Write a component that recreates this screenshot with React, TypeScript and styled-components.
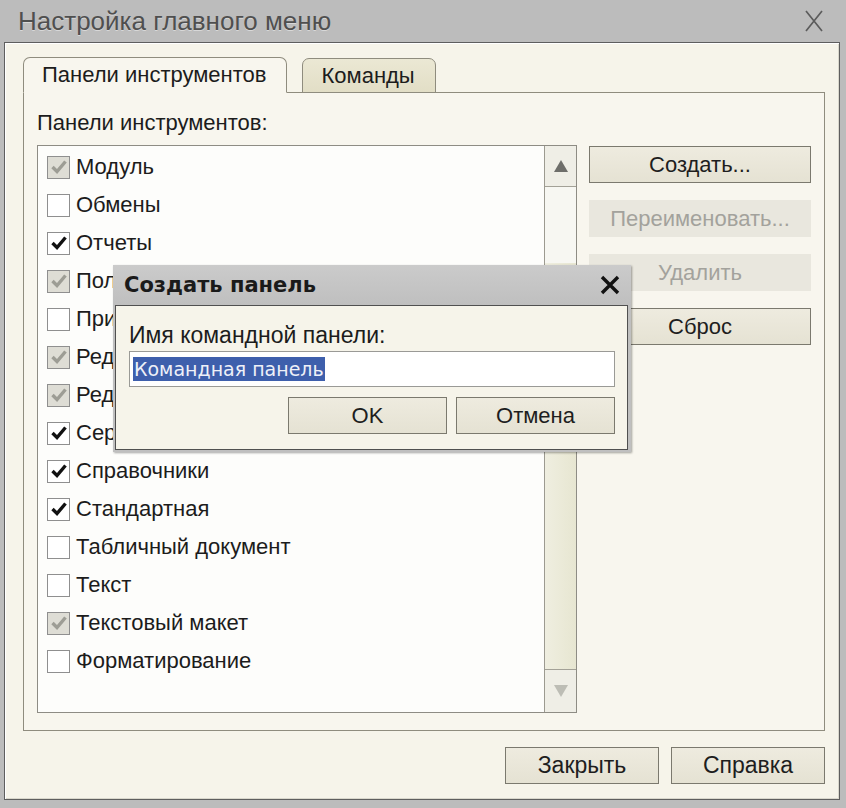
import styled, { createGlobalStyle } from "styled-components";

const GlobalStyle = createGlobalStyle`
  html, body {
    margin: 0;
    padding: 0;
    background: #bcbcbc;
  }
  body {
    font-family: "Liberation Sans", Arial, sans-serif;
    color: #1c1c1c;
  }
  * {
    box-sizing: border-box;
  }
`;

const Window = styled.div`
  position: relative;
  width: 846px;
  height: 808px;
  display: flex;
  flex-direction: column;
  background: #bcbcbc;
  padding: 0 6px 8px 4px;
`;

const TitleBar = styled.div`
  height: 42px;
  display: flex;
  align-items: center;
  justify-content: space-between;
  padding: 0 16px 0 14px;
  font-size: 26px;
  color: #4f4f4f;
  text-shadow: 0 1px 0 #d8d8d8;
`;

const Body = styled.div`
  flex: 1;
  display: flex;
  flex-direction: column;
  background: #f6f4ea;
  border: 1px solid #5e5e5e;
  box-shadow: inset 1px 1px 0 #ffffff, inset -1px -1px 0 #d9d7cc;
  padding: 14px 14px 15px 18px;
`;

const TabStrip = styled.div`
  display: flex;
  align-items: flex-end;
  gap: 15px;
  height: 36px;
  margin-bottom: -1px;
  position: relative;
  z-index: 1;
`;

const Tab = styled.div<{ $active?: boolean }>`
  height: ${(p) => (p.$active ? "36px" : "35px")};
  display: flex;
  align-items: center;
  padding: 0 20px 0 18px;
  font-size: 22px;
  border: 1px solid #8f8c7e;
  border-bottom: 1px solid ${(p) => (p.$active ? "#f8f6ee" : "#8f8c7e")};
  border-radius: 7px 7px 0 0;
  background: ${(p) => (p.$active ? "#f8f6ee" : "linear-gradient(#ebe8d4, #e2dec6)")};
`;

const Panel = styled.div`
  flex: 1;
  display: flex;
  flex-direction: column;
  background: #f8f6ee;
  border: 1px solid #8f8c7e;
  padding: 18px 13px 17px 13px;
`;

const Label = styled.div<{ $size?: number }>`
  font-size: ${(p) => p.$size ?? 22}px;
  line-height: 24px;
`;

const PanelRow = styled.div`
  flex: 1;
  display: flex;
  gap: 12px;
  margin-top: 10px;
`;

const ListBox = styled.div`
  width: 540px;
  display: flex;
  background: #fdfdfb;
  border: 1px solid #8e8c84;
`;

const Items = styled.div`
  flex: 1;
  display: flex;
  flex-direction: column;
  padding: 2px 0 0 9px;
  overflow: hidden;
`;

const Item = styled.div`
  height: 38px;
  display: flex;
  align-items: center;
  gap: 6px;
  font-size: 22px;
  white-space: nowrap;
`;

const Box = styled.span<{ $state: "on" | "gray" | "off" }>`
  width: 23px;
  height: 23px;
  flex-shrink: 0;
  display: flex;
  align-items: center;
  justify-content: center;
  border: 1px solid #8f8f8f;
  background: ${(p) => (p.$state === "gray" ? "#deddd5" : "#ffffff")};
`;

const Scrollbar = styled.div`
  width: 32px;
  display: flex;
  flex-direction: column;
  border-left: 1px solid #9c9a90;
`;

const ScrollButton = styled.div<{ $bottom?: boolean }>`
  height: ${(p) => (p.$bottom ? "43px" : "41px")};
  display: flex;
  align-items: center;
  justify-content: center;
  background: #efeee6;
  border-${(p) => (p.$bottom ? "top" : "bottom")}: 1px solid #a3a197;
`;

const Track = styled.div`
  flex: 1;
  display: flex;
  flex-direction: column;
  background: #f7f7f2;
`;

const Thumb = styled.div`
  flex: 1;
  margin-top: 76px;
  background: linear-gradient(to right, #efeee0, #e7e6d1);
`;

const SideButtons = styled.div`
  width: 222px;
  display: flex;
  flex-direction: column;
  gap: 17px;
  padding-top: 1px;
`;

const Button = styled.button<{ $width?: number }>`
  height: 37px;
  width: ${(p) => (p.$width ? `${p.$width}px` : "100%")};
  display: flex;
  align-items: center;
  justify-content: center;
  font-family: "Liberation Sans", Arial, sans-serif;
  font-size: 22px;
  color: #1e1e1e;
  background: linear-gradient(#eeebdf, #e5e2d3);
  border: 1px solid #7b796e;
  padding: 0;

  &:disabled {
    color: #a3a29c;
    border-color: transparent;
    background: #e9e7de;
  }
`;

const Footer = styled.div`
  display: flex;
  justify-content: flex-end;
  gap: 12px;
  margin-top: 16px;

  & > button {
    font-size: 23px;
  }
`;

const Dialog = styled.div`
  position: absolute;
  left: 113px;
  top: 265px;
  width: 518px;
  height: 187px;
  display: flex;
  flex-direction: column;
  background: linear-gradient(#cbcbcb, #bfbfbf 40px);
  box-shadow: 1px 1px 2px rgba(0, 0, 0, 0.35);
`;

const DialogTitle = styled.div`
  height: 40px;
  display: flex;
  align-items: center;
  justify-content: space-between;
  padding: 0 11px 0 11px;
  font-family: "DejaVu Sans", Verdana, sans-serif;
  font-weight: bold;
  font-size: 21px;
  color: #1a1a1a;
`;

const DialogBody = styled.div`
  flex: 1;
  display: flex;
  flex-direction: column;
  margin: 0 3px 2px 2px;
  background: #f6f4ea;
  border: 1px solid #505050;
  padding: 17px 12px 0 13px;
`;

const NameInput = styled.div`
  height: 36px;
  margin-top: 4px;
  display: flex;
  align-items: center;
  padding: 0 3px;
  background: #ffffff;
  border: 1px solid #9a9a96;
`;

const Selection = styled.span`
  height: 24px;
  display: flex;
  align-items: center;
  padding: 0 1px;
  font-family: "DejaVu Sans", Verdana, sans-serif;
  font-size: 19px;
  color: #eef0f8;
  background: #3e5fac;
`;

const DialogButtons = styled.div`
  display: flex;
  justify-content: flex-end;
  gap: 9px;
  margin-top: 10px;
`;

const CheckMark = ({ color }: { color: string }) => (
  <svg width="16" height="14" viewBox="0 0 16 14">
    <path d="M1.5 7 L6 11.5 L14.5 1.5" fill="none" stroke={color} strokeWidth="3.4" />
  </svg>
);

const items: { name: string; state: "on" | "gray" | "off" }[] = [
  { name: "Модуль", state: "gray" },
  { name: "Обмены", state: "off" },
  { name: "Отчеты", state: "on" },
  { name: "Пользователи", state: "gray" },
  { name: "Присоединенные", state: "off" },
  { name: "Редактирование", state: "gray" },
  { name: "Редактор", state: "gray" },
  { name: "Сервис", state: "on" },
  { name: "Справочники", state: "on" },
  { name: "Стандартная", state: "on" },
  { name: "Табличный документ", state: "off" },
  { name: "Текст", state: "off" },
  { name: "Текстовый макет", state: "gray" },
  { name: "Форматирование", state: "off" },
];

export default function App() {
  return (
    <>
      <GlobalStyle />
      <Window>
        <TitleBar>
          <span>Настройка главного меню</span>
          <svg width="20" height="22" viewBox="0 0 20 22">
            <path d="M2 1 L18 21 M18 1 L2 21" stroke="#5c5c5c" strokeWidth="1.7" />
          </svg>
        </TitleBar>
        <Body>
          <TabStrip>
            <Tab $active>Панели инструментов</Tab>
            <Tab>Команды</Tab>
          </TabStrip>
          <Panel>
            <Label>Панели инструментов:</Label>
            <PanelRow>
              <ListBox>
                <Items>
                  {items.map((it) => (
                    <Item key={it.name}>
                      <Box $state={it.state}>
                        {it.state === "on" && <CheckMark color="#111111" />}
                        {it.state === "gray" && <CheckMark color="#9d9d95" />}
                      </Box>
                      {it.name}
                    </Item>
                  ))}
                </Items>
                <Scrollbar>
                  <ScrollButton>
                    <svg width="14" height="12" viewBox="0 0 14 12">
                      <path d="M7 0 L14 12 L0 12 Z" fill="#6e6e6a" />
                    </svg>
                  </ScrollButton>
                  <Track>
                    <Thumb />
                  </Track>
                  <ScrollButton $bottom>
                    <svg width="14" height="12" viewBox="0 0 14 12">
                      <path d="M0 0 L14 0 L7 12 Z" fill="#bdbdb5" />
                    </svg>
                  </ScrollButton>
                </Scrollbar>
              </ListBox>
              <SideButtons>
                <Button>Создать...</Button>
                <Button disabled>Переименовать...</Button>
                <Button disabled>Удалить</Button>
                <Button>Сброс</Button>
              </SideButtons>
            </PanelRow>
          </Panel>
          <Footer>
            <Button $width={154}>Закрыть</Button>
            <Button $width={154}>Справка</Button>
          </Footer>
        </Body>
        <Dialog>
          <DialogTitle>
            <span>Создать панель</span>
            <svg width="20" height="20" viewBox="0 0 20 20">
              <path d="M2 2 L18 18 M18 2 L2 18" stroke="#111111" strokeWidth="3.4" />
            </svg>
          </DialogTitle>
          <DialogBody>
            <Label $size={23}>Имя командной панели:</Label>
            <NameInput>
              <Selection>Командная панель</Selection>
            </NameInput>
            <DialogButtons>
              <Button $width={159}>OK</Button>
              <Button $width={159}>Отмена</Button>
            </DialogButtons>
          </DialogBody>
        </Dialog>
      </Window>
    </>
  );
}
